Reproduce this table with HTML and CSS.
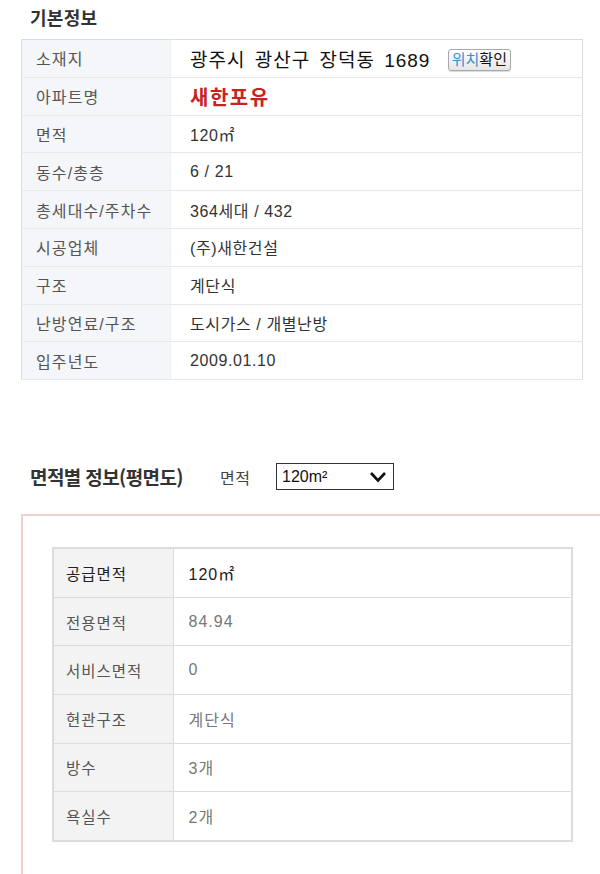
FILE: index.html
```html
<!DOCTYPE html>
<html lang="ko">
<head>
<meta charset="utf-8">
<link rel="stylesheet" href="styles.css">
</head>
<body>
<div class="page">
  <h2 class="title">기본정보</h2>
  <table class="basic">
    <tr><th>소재지</th><td class="addr">광주시 광산구 장덕동 1689 <span class="locbtn"><span class="blue">위치</span>확인</span></td></tr>
    <tr><th>아파트명</th><td class="name">새한포유</td></tr>
    <tr><th>면적</th><td>120㎡</td></tr>
    <tr><th>동수/총층</th><td>6 / 21</td></tr>
    <tr><th>총세대수/주차수</th><td>364세대 / 432</td></tr>
    <tr><th>시공업체</th><td>(주)새한건설</td></tr>
    <tr><th>구조</th><td>계단식</td></tr>
    <tr><th>난방연료/구조</th><td>도시가스 / 개별난방</td></tr>
    <tr><th>입주년도</th><td>2009.01.10</td></tr>
  </table>

  <div class="sec2head">
    <h2 class="title2">면적별 정보(평면도)</h2>
    <span class="lbl">면적</span>
    <div class="select"><span>120m²</span>
      <svg width="18" height="12" viewBox="0 0 18 12"><path d="M2 2 L9 9.5 L16 2" fill="none" stroke="#111" stroke-width="2.6"/></svg>
    </div>
  </div>

  <div class="pinkbox">
    <table class="area">
      <tr><th class="strong">공급면적</th><td class="strong">120㎡</td></tr>
      <tr><th>전용면적</th><td>84.94</td></tr>
      <tr><th>서비스면적</th><td>0</td></tr>
      <tr><th>현관구조</th><td>계단식</td></tr>
      <tr><th>방수</th><td>3개</td></tr>
      <tr><th>욕실수</th><td>2개</td></tr>
    </table>
  </div>
</div>
</body>
</html>
```
FILE: styles.css
```css
html, body {
  margin: 0;
  padding: 0;
  background: #fff;
  overflow: hidden;
}
body {
  font-family: "Liberation Sans", "Noto Sans CJK KR", sans-serif;
  color: #333;
}
.page {
  padding: 0 0 0 21px;
  width: 579px;
}
.title {
  margin: 0;
  padding: 4px 0 0 9px;
  height: 39px;
  box-sizing: border-box;
  font-family: "Noto Sans CJK KR", sans-serif;
  font-size: 18px;
  font-weight: 700;
  letter-spacing: 0.3px;
  color: #333;
  line-height: 26px;
}
.basic {
  border-collapse: collapse;
  width: 562px;
  border: 1px solid #dcdcdc;
}
.basic th, .basic td {
  height: 36.8px;
  padding: 0;
  border-bottom: 1px solid #e8e8e8;
  text-align: left;
  vertical-align: middle;
}
.basic th {
  width: 149px;
  background: #f4f6f9;
  font-weight: 400;
  font-size: 16px;
  letter-spacing: 1.1px;
  color: #555;
  padding-left: 14px;
  box-sizing: border-box;
  border-right: 1px solid #eceff3;
}
.basic td {
  padding-left: 19px;
  font-size: 16px;
  letter-spacing: 0.6px;
  word-spacing: 0;
  color: #333;
}
.basic td.addr {
  font-size: 19px;
  letter-spacing: 1px;
  word-spacing: 3px;
  color: #111;
}
.locbtn {
  display: inline-block;
  margin-left: 8px;
  padding: 0 3px;
  height: 20px;
  line-height: 20px;
  font-size: 15px;
  letter-spacing: 0;
  word-spacing: 0;
  color: #111;
  border: 1px solid #a9a9a9;
  border-radius: 3px;
  background: linear-gradient(#ffffff, #e6e6e6);
  box-shadow: 0 1px 1px rgba(0,0,0,0.15);
  vertical-align: 2px;
}
.locbtn .blue { color: #3c8dcb; }
.basic td.name {
  font-size: 20px;
  font-weight: 700;
  color: #c8231f;
  letter-spacing: 1.5px;
}
.sec2head {
  display: flex;
  align-items: center;
  margin-top: 83px;
  height: 27px;
}
.title2 {
  margin: 0 0 0 9px;
  font-family: "Noto Sans CJK KR", sans-serif;
  font-size: 19px;
  font-weight: 700;
  letter-spacing: -0.6px;
  color: #333;
  width: 190px;
}
.lbl {
  font-size: 16px;
  letter-spacing: 0.5px;
  color: #444;
  width: 56px;
}
.select {
  box-sizing: border-box;
  width: 118px;
  height: 27px;
  border: 1px solid #333;
  display: flex;
  align-items: center;
  justify-content: space-between;
  padding: 0 6px 0 5px;
  font-size: 16px;
  color: #111;
}
.pinkbox {
  margin-top: 24px;
  border: 2px solid #f2d0d0;
  border-right: none;
  width: 600px;
  height: 400px;
  box-sizing: border-box;
  padding: 31px 0 0 29px;
}
.area {
  border-collapse: collapse;
  width: 521px;
  border: 2px solid #dcdcdc;
}
.area th, .area td {
  height: 47.6px;
  padding: 0;
  border-bottom: 1px solid #dcdcdc;
  text-align: left;
  vertical-align: middle;
  font-size: 16px;
  letter-spacing: 1px;
}
.area th {
  width: 120px;
  box-sizing: border-box;
  background: #f3f3f3;
  font-size: 15.5px;
  font-weight: 400;
  color: #555;
  padding-left: 12px;
  border-right: 1px solid #dcdcdc;
}
.area td {
  padding-left: 15px;
  color: #777;
}
.area th.strong { color: #222; }
.area td.strong { color: #222; }
```
